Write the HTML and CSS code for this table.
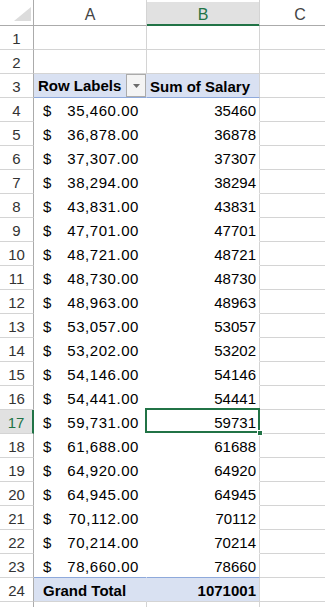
FILE: index.html
```html
<!DOCTYPE html>
<html>
<head>
<meta charset="utf-8">
<link rel="stylesheet" href="styles.css">
</head>
<body>
<div class="sheet">
  <div class="ch corner"><svg class="tri" width="18" height="15" viewBox="0 0 18 15"><polygon points="17,0 17,14 0,14" fill="#dcdcdc"/></svg></div>
  <div class="ch">A</div>
  <div class="ch sel">B</div>
  <div class="ch last">C</div>

  <div class="rh">1</div><div class="c"></div><div class="c"></div><div class="c last"></div>
  <div class="rh">2</div><div class="c"></div><div class="c"></div><div class="c last"></div>

  <div class="rh">3</div>
  <div class="c pa ph hdrA"><span class="b">Row Labels</span><span class="dd"><svg width="7" height="4" viewBox="0 0 7 4"><polygon points="0,0 7,0 3.5,4" fill="#6b6b6b"/></svg></span></div>
  <div class="c pb ph"><span class="b">Sum of Salary</span></div>
  <div class="c last"></div>

  <div class="rh">4</div><div class="c pa acc"><span>$</span><span class="amt">35,460.00</span></div><div class="c pb num">35460</div><div class="c last"></div>
  <div class="rh">5</div><div class="c pa acc"><span>$</span><span class="amt">36,878.00</span></div><div class="c pb num">36878</div><div class="c last"></div>
  <div class="rh">6</div><div class="c pa acc"><span>$</span><span class="amt">37,307.00</span></div><div class="c pb num">37307</div><div class="c last"></div>
  <div class="rh">7</div><div class="c pa acc"><span>$</span><span class="amt">38,294.00</span></div><div class="c pb num">38294</div><div class="c last"></div>
  <div class="rh">8</div><div class="c pa acc"><span>$</span><span class="amt">43,831.00</span></div><div class="c pb num">43831</div><div class="c last"></div>
  <div class="rh">9</div><div class="c pa acc"><span>$</span><span class="amt">47,701.00</span></div><div class="c pb num">47701</div><div class="c last"></div>
  <div class="rh">10</div><div class="c pa acc"><span>$</span><span class="amt">48,721.00</span></div><div class="c pb num">48721</div><div class="c last"></div>
  <div class="rh">11</div><div class="c pa acc"><span>$</span><span class="amt">48,730.00</span></div><div class="c pb num">48730</div><div class="c last"></div>
  <div class="rh">12</div><div class="c pa acc"><span>$</span><span class="amt">48,963.00</span></div><div class="c pb num">48963</div><div class="c last"></div>
  <div class="rh">13</div><div class="c pa acc"><span>$</span><span class="amt">53,057.00</span></div><div class="c pb num">53057</div><div class="c last"></div>
  <div class="rh">14</div><div class="c pa acc"><span>$</span><span class="amt">53,202.00</span></div><div class="c pb num">53202</div><div class="c last"></div>
  <div class="rh">15</div><div class="c pa acc"><span>$</span><span class="amt">54,146.00</span></div><div class="c pb num">54146</div><div class="c last"></div>
  <div class="rh">16</div><div class="c pa acc"><span>$</span><span class="amt">54,441.00</span></div><div class="c pb num">54441</div><div class="c last"></div>
  <div class="rh active">17</div><div class="c pa acc"><span>$</span><span class="amt">59,731.00</span></div><div class="c pb num cur">59731</div><div class="c last"></div>
  <div class="rh">18</div><div class="c pa acc"><span>$</span><span class="amt">61,688.00</span></div><div class="c pb num">61688</div><div class="c last"></div>
  <div class="rh">19</div><div class="c pa acc"><span>$</span><span class="amt">64,920.00</span></div><div class="c pb num">64920</div><div class="c last"></div>
  <div class="rh">20</div><div class="c pa acc"><span>$</span><span class="amt">64,945.00</span></div><div class="c pb num">64945</div><div class="c last"></div>
  <div class="rh">21</div><div class="c pa acc"><span>$</span><span class="amt">70,112.00</span></div><div class="c pb num">70112</div><div class="c last"></div>
  <div class="rh">22</div><div class="c pa acc"><span>$</span><span class="amt">70,214.00</span></div><div class="c pb num">70214</div><div class="c last"></div>
  <div class="rh">23</div><div class="c pa acc pre"><span>$</span><span class="amt">78,660.00</span></div><div class="c pb num pre">78660</div><div class="c last"></div>

  <div class="rh">24</div>
  <div class="c pa gt"><span class="b">Grand Total</span></div>
  <div class="c pb gt num"><span class="b">1071001</span></div>
  <div class="c last"></div>

  <div class="rh"></div><div class="c"></div><div class="c"></div><div class="c last"></div>
</div>
</body>
</html>
```
FILE: styles.css
```css
html, body {
  margin: 0;
  padding: 0;
  overflow: hidden;
  background: #fff;
}

.sheet {
  display: grid;
  grid-template-columns: 34px 113px 113px 80px;
  grid-template-rows: 26px repeat(25, 24px);
  font-family: "Liberation Sans", Arial, sans-serif;
  font-size: 15px;
  color: #000;
}

.sheet > div {
  box-sizing: border-box;
  white-space: nowrap;
  overflow: hidden;
}

.ch {
  border-right: 1px solid #d4d4d4;
  border-bottom: 1px solid #ababab;
  padding-top: 4px;
  line-height: 21px;
  font-size: 16px;
  color: #444;
  text-align: center;
}

.ch.corner {
  border-right-color: #ababab;
  position: relative;
}

.tri {
  position: absolute;
  left: 14px;
  top: 7px;
}

.ch.sel {
  background: #e1e1e1;
  color: #217346;
  border-bottom-color: #217346;
  box-shadow: inset 0 2px 0 #fff, inset 0 -1px 0 #217346;
}

.last {
  border-right: none !important;
}

.rh {
  border-right: 1px solid #ababab;
  border-bottom: 1px solid #d4d4d4;
  padding-top: 2px;
  line-height: 21px;
  text-align: center;
  color: #333;
}

.rh.active {
  background: #e1e1e1;
  color: #217346;
  border-right: 2px solid #217346;
}

.c {
  border-right: 1px solid #d4d4d4;
  border-bottom: 1px solid #d4d4d4;
  padding: 2px 4px 0;
  line-height: 21px;
}

.pa {
  border-right-color: transparent;
  border-bottom-color: transparent;
}

.pb {
  border-bottom-color: transparent;
}

.ph {
  background: #d9e1f2;
  border-bottom-color: #8ea9db;
}

.pre {
  border-bottom-color: #8ea9db;
}

.gt {
  background: #d9e1f2;
  border-bottom-color: #d4d4d4;
}

.pa.gt {
  padding-left: 9px;
}

.b {
  font-weight: bold;
}

.hdrA {
  display: flex;
  justify-content: space-between;
  align-items: center;
  padding: 0 0 0 4px;
  line-height: 23px;
}

.pb.ph {
  padding-left: 3px;
}

.dd {
  box-sizing: border-box;
  width: 20px;
  height: 23px;
  border: 1px solid #ababab;
  background: #f4f4f4;
  display: flex;
  align-items: center;
  justify-content: center;
}

.dd svg {
  display: block;
}

.acc {
  display: flex;
  justify-content: space-between;
  padding: 2px 7px 0 9px;
}

.amt {
  letter-spacing: 0.55px;
}

.num {
  text-align: right;
  padding-right: 3px;
}

.gt.num {
  padding-right: 3px;
}

.cur {
  position: relative;
  overflow: visible !important;
}

.cur::before {
  content: "";
  position: absolute;
  left: -2px;
  right: -1px;
  top: -2px;
  bottom: 0;
  border: 2px solid #217346;
  pointer-events: none;
}

.cur::after {
  content: "";
  position: absolute;
  left: 110px;
  top: 20px;
  width: 4px;
  height: 4px;
  background: #217346;
  border: 1px solid #fff;
}
```
